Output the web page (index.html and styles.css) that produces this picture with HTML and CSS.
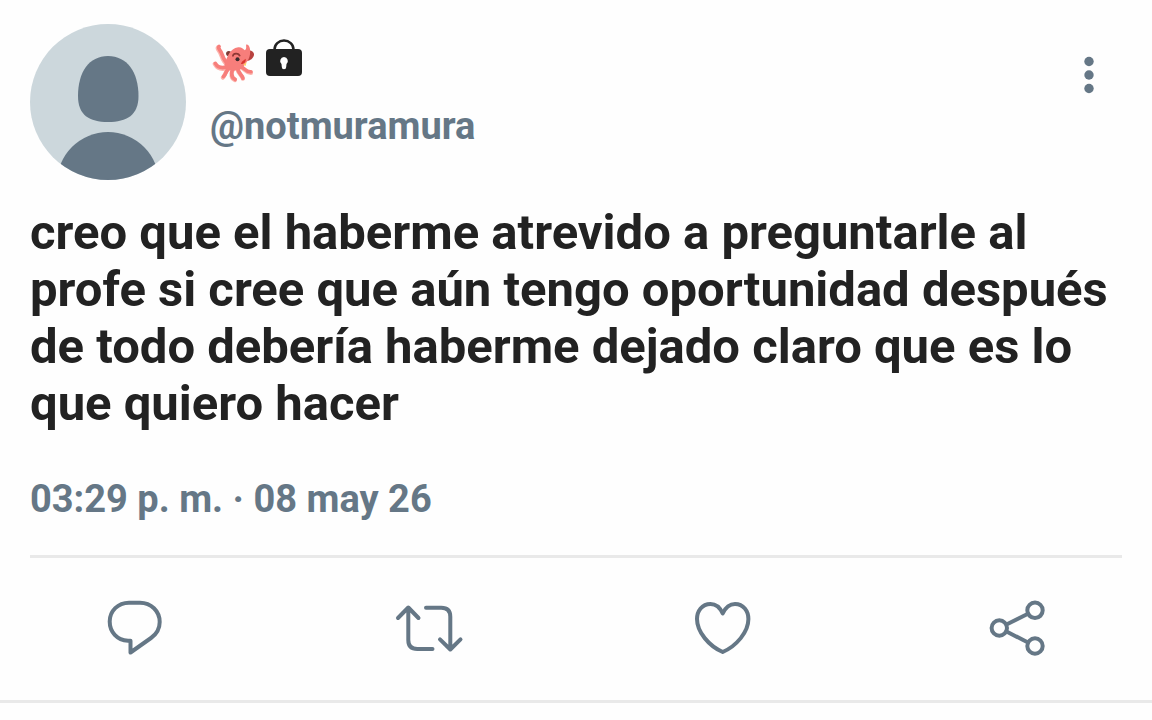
FILE: index.html
```html
<!DOCTYPE html>
<html lang="es">
<head>
    <meta charset="UTF-8">
    <meta name="viewport" content="width=device-width, initial-scale=1.0">
    <title>Tweet</title>
    <link rel="stylesheet" href="styles.css">
</head>
<body>
    <article class="tweet">
        <header class="tweet-header">
            <svg class="avatar" viewBox="0 0 156 156" role="img" aria-label="Avatar">
                <clipPath id="round"><circle cx="78" cy="78" r="78"/></clipPath>
                <g clip-path="url(#round)">
                    <rect width="156" height="156" fill="#ccd7dc"/>
                    <path d="M78 32C97 32 108.500 48 108.500 72C108.500 91 97 98 78 98C59 98 48 91 48 72C48 48 59 32 78 32Z" fill="#657786"/>
                    <circle cx="78" cy="159" r="51" fill="#657786"/>
                </g>
            </svg>
            <div class="user">
                <div class="name">
                    <!-- octopus -->
                    <svg class="octopus" viewBox="26 42 128 118" role="img" aria-label="Pulpo">
                        <path d="M124 66C140 60 152 66 151 77C149 87 140 94 129 95Z" fill="#b8423f"/>
                        <circle cx="76" cy="73" r="8" fill="#7d3a35"/>
                        <g fill="none" stroke="#fcb5ae" stroke-width="12" stroke-linecap="round" stroke-linejoin="round">
                            <path d="M72 106C54 96 56 74 46 64C43 60 42 56 44 54"/>
                            <path d="M78 114C58 122 42 118 34 104"/>
                            <path d="M78 118C64 124 66 138 58 145"/>
                            <path d="M88 122C80 136 84 148 94 152"/>
                            <path d="M102 120C104 134 116 138 118 148"/>
                            <path d="M108 114C124 116 126 132 142 131"/>
                        </g>
                        <g fill="none" stroke="#f77e7b" stroke-width="11" stroke-linecap="round" stroke-linejoin="round">
                            <path d="M74 102C56 94 60 74 49 62C46 58 45 54 47 52"/>
                            <path d="M78 110C58 118 44 116 36 102"/>
                            <path d="M80 114C66 120 70 134 60 141"/>
                            <path d="M88 116C82 132 84 144 95 150"/>
                            <path d="M102 116C104 132 116 136 118 146"/>
                            <path d="M108 112C124 112 124 129 142 127"/>
                        </g>
                        <path d="M66 96C72 84 78 58 104 54C114 53 118 58 124 63C131 58 126 50 128 46C136 44 142 58 139 76C136 94 128 98 122 108C112 126 84 128 72 118C62 112 62 104 66 96Z" fill="#f77e7b"/>
                        <path d="M88 82C88 70 106 70 109 81" fill="none" stroke="#8e3835" stroke-width="5"/>
                        <circle cx="102" cy="90" r="6" fill="#3b2b2c"/>
                        <path d="M112 104C124 104 128 94 126 88L115 97Z" fill="#d9362e"/>
                        <path d="M119 106L129 98L126 110Z" fill="#ffcf62"/>
                    </svg>
                    <!-- lock -->
                    <svg class="lock" viewBox="0 0 38 40" role="img" aria-label="Cuenta protegida">
                        <path d="M9.500 12V10.500A9.500 9 0 0 1 28.500 10.500V12" fill="none" stroke="#222" stroke-width="2.500"/>
                        <rect x="1" y="10" width="36" height="27" rx="4" fill="#222"/>
                        <path d="M19 18a4 4 0 0 1 2.500 7L21.200 28a2.200 2.200 0 0 1-4.400 0L16.500 25A4 4 0 0 1 19 18Z" fill="#fff"/>
                    </svg>
                </div>
                <a class="handle" href="#">@notmuramura</a>
            </div>
            <button type="button" class="more" aria-label="Más opciones">
                <svg viewBox="0 0 66 66">
                    <circle cx="33" cy="19.500" r="4.700"/>
                    <circle cx="33" cy="33" r="4.700"/>
                    <circle cx="33" cy="46.500" r="4.700"/>
                </svg>
            </button>
        </header>

        <p class="text">creo que el haberme atrevido a preguntarle al profe si cree que aún tengo oportunidad después de todo debería haberme dejado claro que es lo que quiero hacer</p>
        <time class="date" datetime="2026-05-08T15:29">03:29 p. m. · 08 may 26</time>

        <footer class="actions">
            <button type="button" class="action" aria-label="Responder">
                <svg viewBox="0 0 70 70">
                    <path d="M30.500 47.700H28C17 47 9.700 39 9.700 28.500C9.700 18 18 9.700 29 9.700H40C51 9.700 59.700 18 59.700 29C59.700 36 56 41.500 51 45L30.500 59.500Z"/>
                </svg>
            </button>
            <button type="button" class="action" aria-label="Retwittear">
                <svg viewBox="0 0 70 70">
                    <path d="M4 25L14.300 14.500L24.500 25M14.300 15V47Q14.300 56 23.300 56H38.500"/>
                    <path d="M32 14.700H47.300Q56.300 14.700 56.300 23.700V56M46 46.300L56.300 56.500L66.500 46.300"/>
                </svg>
            </button>
            <button type="button" class="action" aria-label="Me gusta">
                <svg viewBox="0 0 70 70">
                    <path d="M34.700 20.500C32 14.500 27.500 11 22.500 11C14 11 9 18 9 26C9 39 21 53 34.700 59C48.500 53 60.400 39 60.400 26C60.400 18 55.400 11 47 11C42 11 37.500 14.500 34.700 20.500Z"/>
                </svg>
            </button>
            <button type="button" class="action" aria-label="Compartir">
                <svg viewBox="0 0 70 70">
                    <circle cx="17.300" cy="35" r="7.700"/>
                    <circle cx="53" cy="17.300" r="7.700"/>
                    <circle cx="53" cy="53" r="7.700"/>
                    <path d="M24.500 31.500L46 20.800M24.500 38.500L46 49.500"/>
                </svg>
            </button>
        </footer>
    </article>
</body>
</html>
```
FILE: styles.css
```css
body{
    margin: 0;
    background: #fefefe;
    font-family: Roboto, Arial, sans-serif;
    font-weight: bold;
    color: #222222;
}
button{
    padding: 0;
    border: none;
    background: none;
    cursor: pointer;
}
svg{
    display: block;
}
.tweet{
    padding-top: 24px;
    border-bottom: 3px solid #e9e9e9;
}
.tweet-header{
    display: flex;
    padding: 0 30px;
    gap: 24px;
}
.avatar{
    width: 156px;
    height: 156px;
}
.user{
    flex: 1;
    padding-top: 14px;
}
.name{
    display: flex;
    align-items: flex-start;
    gap: 10px;
    height: 48px;
    padding-left: 2px;
    margin-bottom: 18px;
}
.octopus{
    width: 43px;
    height: 40px;
    margin-top: 5px;
}
.lock{
    width: 38px;
    height: 40px;
    margin-top: 1px;
}
.handle, .date{
    font-size: 38px;
    line-height: 44px;
    color: #657786;
    text-decoration: none;
}
.more{
    align-self: flex-start;
    width: 66px;
    height: 66px;
    margin-top: 18px;
    fill: #657786;
}
.text{
    margin: 24px 30px 0;
    font-size: 49px;
    line-height: 57px;
}
.date{
    display: block;
    margin: 45px 30px 0;
    padding-bottom: 34px;
    border-bottom: 3px solid #e9e9e9;
}
.actions{
    display: flex;
    justify-content: space-between;
    padding: 35px 100px 37px;
}
.action{
    width: 70px;
    height: 70px;
}
.action svg{
    fill: none;
    stroke: #657786;
    stroke-width: 4;
    stroke-linecap: round;
    stroke-linejoin: round;
}
```
